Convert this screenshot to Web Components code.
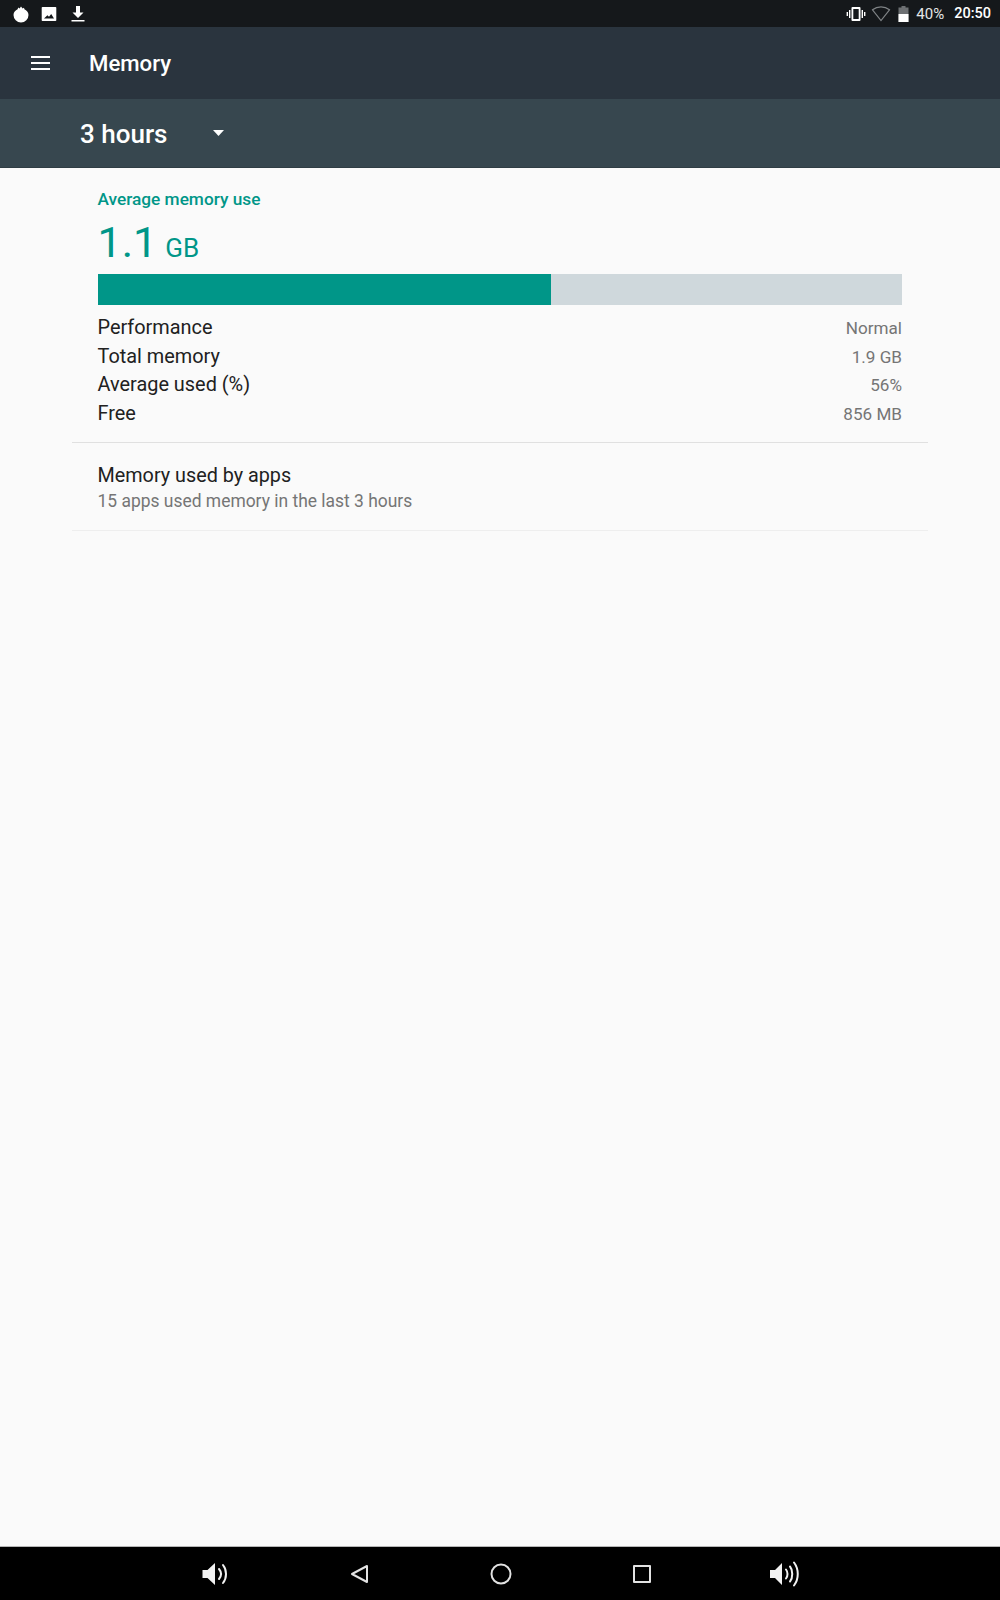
<!DOCTYPE html>
<html>
<head>
<meta charset="utf-8">
<title>Memory</title>
<style>
  html, body { margin: 0; height: 100%; }
  body { font-family: Roboto, "Noto Sans", sans-serif; background: #fafafa; }
  #app { display: flex; flex-direction: column; height: 1600px; width: 1000px; overflow: hidden; }
</style>
</head>
<body>
<div id="app">
  <status-bar></status-bar>
  <app-toolbar>Memory</app-toolbar>
  <period-spinner>3 hours</period-spinner>
  <memory-page>
    <memory-summary label="Average memory use" value="1.1" unit="GB" percent="56.37">
      <stat-row label="Performance" value="Normal"></stat-row>
      <stat-row label="Total memory" value="1.9 GB"></stat-row>
      <stat-row label="Average used (%)" value="56%"></stat-row>
      <stat-row label="Free" value="856 MB"></stat-row>
    </memory-summary>
    <list-item primary="Memory used by apps" secondary="15 apps used memory in the last 3 hours"></list-item>
  </memory-page>
  <nav-bar></nav-bar>
</div>

<script>
class StatusBar extends HTMLElement {
  constructor() {
    super();
    const shadowRoot = this.attachShadow({ mode: "open" });
    shadowRoot.innerHTML = `
      <style>
        :host {
          display: flex;
          align-items: center;
          justify-content: space-between;
          flex: none;
          height: 27px;
          background: #15181b;
          color: #fff;
          font-size: 14px;
          padding: 0 9px 0 12px;
        }
        .side { display: flex; align-items: center; }
        svg { display: block; fill: #fff; }
        .left { gap: 11px; }
        .pct { font-size: 15px; color: #e4e6e7; margin-left: 7px; }
        .time { font-size: 14.5px; font-weight: 500; margin-left: 10px; }
      </style>
      <div class="side left">
        <svg width="18" height="18" viewBox="0 0 18 18"><path d="M9 1.500 10.600 3.600 12 2.800 12.400 4.200C14.600 5.200 16.500 7.200 16.500 10A7.500 7.500 0 0 1 1.500 10C1.500 7.200 3.400 5.200 5.600 4.200L6.300 2.600 7.600 3.400Z"/></svg>
        <svg width="16" height="16" viewBox="0 0 16 16"><path fill-rule="evenodd" d="M1.500 1H14.500A.800 .800 0 0 1 15.300 1.800V14.200A.800 .800 0 0 1 14.500 15H1.500A.800 .800 0 0 1 .700 14.200V1.800A.800 .800 0 0 1 1.500 1ZM3 12.500H13L10.200 8 8 10.800 6.400 9.200Z"/></svg>
        <svg width="16" height="18" viewBox="0 0 16 18" style="margin-left:2px"><path d="M6 1H10V7.500H13.500L8 13 2.500 7.500H6ZM1.500 15H14.500V16.500H1.500Z"/></svg>
      </div>
      <div class="side right">
        <svg width="20" height="16" viewBox="0 0 20 16" style="margin-right:5px"><path fill-rule="evenodd" d="M6.500 1H13.500A1 1 0 0 1 14.500 2V14A1 1 0 0 1 13.500 15H6.500A1 1 0 0 1 5.500 14V2A1 1 0 0 1 6.500 1ZM7.300 3V13H12.700V3ZM3 4H4.400V12H3ZM15.600 4H17V12H15.600ZM.600 6H2V10H.600ZM18 6H19.400V10H18Z"/></svg>
        <svg width="20" height="16" viewBox="0 0 20 16" style="margin-right:7px"><path d="M1.500 3.800C6.500 -.200 13.500 -.200 18.500 3.800L10 14.500Z" fill="none" stroke="#7f8386" stroke-width="1.200"/></svg>
        <svg width="11" height="16" viewBox="0 0 11 16"><path d="M3.500 0H7.500V1.500H10.500V16H.500V1.500H3.500Z" fill="#6d7073"/><path d="M.500 8H10.500V16H.500Z"/></svg>
        <span class="pct">40%</span>
        <span class="time">20:50</span>
      </div>
    `;
  }
}

class AppToolbar extends HTMLElement {
  constructor() {
    super();
    const shadowRoot = this.attachShadow({ mode: "open" });
    shadowRoot.innerHTML = `
      <style>
        :host {
          display: flex;
          align-items: center;
          flex: none;
          height: 72px;
          background: #2a343e;
          color: #fff;
          font-size: 22.2px;
          font-weight: 500;
          padding: 0 0 0 31px;
          box-sizing: border-box;
        }
        svg { display: block; fill: #fff; margin-right: 39px; margin-top: -1px; }
      </style>
      <svg width="19" height="14" viewBox="0 0 19 14"><path d="M0 0H19V2H0ZM0 6H19V8H0ZM0 12H19V14H0Z"/></svg>
      <slot></slot>
    `;
  }
}

class PeriodSpinner extends HTMLElement {
  constructor() {
    super();
    const shadowRoot = this.attachShadow({ mode: "open" });
    shadowRoot.innerHTML = `
      <style>
        :host {
          display: flex;
          align-items: center;
          flex: none;
          height: 69px;
          background: #37474f;
          color: #fff;
          font-size: 26px;
          font-weight: 500;
          padding: 2px 0 0 80px;
          box-sizing: border-box;
          border-bottom: 1px solid #2f3d44;
        }
        .label { width: 133px; }
        svg { display: block; fill: #fff; margin-bottom: 3px; }
      </style>
      <span class="label"><slot></slot></span>
      <svg width="11" height="6" viewBox="0 0 11 6"><path d="M0 0H11L5.500 6Z"/></svg>
    `;
  }
}

class MemoryPage extends HTMLElement {
  constructor() {
    super();
    const shadowRoot = this.attachShadow({ mode: "open" });
    shadowRoot.innerHTML = `
      <style>
        :host {
          display: block;
          flex: 1;
          background: #fafafa;
          padding: 0 72px;
        }
      </style>
      <slot></slot>
    `;
  }
}

class MemorySummary extends HTMLElement {
  constructor() {
    super();
    const shadowRoot = this.attachShadow({ mode: "open" });
    shadowRoot.innerHTML = `
      <style>
        :host {
          display: block;
          padding: 21px 26px 14px 25.5px;
          border-bottom: 1px solid #e0e0e0;
        }
        .label { color: #009688; font-size: 17.25px; font-weight: 500; line-height: 20px; }
        .amount { color: #009688; display: flex; align-items: baseline; height: 65px; line-height: 66px; }
        .value { font-size: 43px; }
        .unit { font-size: 26px; margin-left: 8px; }
        .bar { display: flex; height: 31px; background: #cfd8dc; margin-bottom: 9px; }
        .fill { background: #009688; }
      </style>
      <div class="label"></div>
      <div class="amount"><span class="value"></span><span class="unit"></span></div>
      <div class="bar"><div class="fill"></div></div>
      <slot></slot>
    `;
    shadowRoot.querySelector(".label").textContent = this.getAttribute("label");
    shadowRoot.querySelector(".value").textContent = this.getAttribute("value");
    shadowRoot.querySelector(".unit").textContent = this.getAttribute("unit");
    shadowRoot.querySelector(".fill").style.width = this.getAttribute("percent") + "%";
  }
}

class StatRow extends HTMLElement {
  constructor() {
    super();
    const shadowRoot = this.attachShadow({ mode: "open" });
    shadowRoot.innerHTML = `
      <style>
        :host {
          display: flex;
          justify-content: space-between;
          align-items: baseline;
          height: 28.5px;
          line-height: 28.5px;
          font-size: 19.9px;
          color: #212121;
        }
        .value { font-size: 17.1px; color: #757575; }
      </style>
      <span class="label"></span>
      <span class="value"></span>
    `;
    shadowRoot.querySelector(".label").textContent = this.getAttribute("label");
    shadowRoot.querySelector(".value").textContent = this.getAttribute("value");
  }
}

class ListItem extends HTMLElement {
  constructor() {
    super();
    const shadowRoot = this.attachShadow({ mode: "open" });
    shadowRoot.innerHTML = `
      <style>
        :host {
          display: block;
          padding: 19px 26px 17px 25.5px;
          border-bottom: 1px solid #eeeeee;
        }
        .primary { font-size: 19.8px; line-height: 27px; color: #212121; }
        .secondary { font-size: 17.45px; line-height: 24px; color: #757575; }
      </style>
      <div class="primary"></div>
      <div class="secondary"></div>
    `;
    shadowRoot.querySelector(".primary").textContent = this.getAttribute("primary");
    shadowRoot.querySelector(".secondary").textContent = this.getAttribute("secondary");
  }
}

class NavBar extends HTMLElement {
  constructor() {
    super();
    const shadowRoot = this.attachShadow({ mode: "open" });
    shadowRoot.innerHTML = `
      <style>
        :host {
          display: flex;
          align-items: center;
          justify-content: center;
          gap: 88px;
          flex: none;
          height: 54px;
          box-sizing: border-box;
          background: #000;
          border-top: 1px solid #b5b5b5;
        }
        svg { display: block; width: 54px; height: 30px; }
        .solid { fill: #f2f2f2; }
        .line { fill: none; stroke: #e2e2e2; stroke-width: 2; stroke-linejoin: round; }
        .wave { fill: none; stroke: #f2f2f2; stroke-width: 2; stroke-linecap: round; }
      </style>
      <svg viewBox="0 0 54 30"><path class="solid" d="M13.500 11H18.500L26 4V26L18.500 19H13.500Z"/><path class="wave" d="M30 10C32.500 13 32.500 17 30 20"/><path class="wave" d="M34 6C38 11 38 19 34 24"/></svg>
      <svg viewBox="0 0 54 30"><path class="line" d="M36 7V23L21 15Z"/></svg>
      <svg viewBox="0 0 54 30"><circle class="line" cx="28" cy="15" r="9.500"/></svg>
      <svg viewBox="0 0 54 30"><path class="line" d="M19 7H35V23H19Z"/></svg>
      <svg viewBox="0 0 54 30"><path class="solid" d="M13 11H18L25 4V26L18 19H13Z"/><path class="wave" d="M29 10.500C31 13 31 17 29 19.500"/><path class="wave" d="M33 7.500C36 11 36 19 33 22.500"/><path class="wave" d="M37 3.500C42 10 42 20 37 26.500"/></svg>
    `;
  }
}

customElements.define("status-bar", StatusBar);
customElements.define("app-toolbar", AppToolbar);
customElements.define("period-spinner", PeriodSpinner);
customElements.define("memory-page", MemoryPage);
customElements.define("memory-summary", MemorySummary);
customElements.define("stat-row", StatRow);
customElements.define("list-item", ListItem);
customElements.define("nav-bar", NavBar);
</script>
</body>
</html>
